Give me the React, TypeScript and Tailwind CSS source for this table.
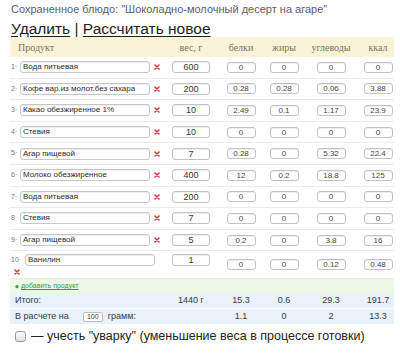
const rows = [
  { n: 1, name: 'Вода питьевая', w: '600', p: '0', f: '0', c: '0', k: '0' },
  { n: 2, name: 'Кофе вар.из молот.без сахара', w: '200', p: '0.28', f: '0.28', c: '0.06', k: '3.88' },
  { n: 3, name: 'Какао обезжиренное 1%', w: '10', p: '2.49', f: '0.1', c: '1.17', k: '23.9' },
  { n: 4, name: 'Стевия', w: '10', p: '0', f: '0', c: '0', k: '0' },
  { n: 5, name: 'Агар пищевой', w: '7', p: '0.28', f: '0', c: '5.32', k: '22.4' },
  { n: 6, name: 'Молоко обезжиренное', w: '400', p: '12', f: '0.2', c: '18.8', k: '125' },
  { n: 7, name: 'Вода питьевая', w: '200', p: '0', f: '0', c: '0', k: '0' },
  { n: 8, name: 'Стевия', w: '7', p: '0', f: '0', c: '0', k: '0' },
  { n: 9, name: 'Агар пищевой', w: '5', p: '0.2', f: '0', c: '3.8', k: '16' },
]

const grid = 'grid grid-cols-[158px_46px_54px_32px_62px_32px]'

function Cross() {
  return (
    <svg width="6" height="6" viewBox="0 0 6 6" className="shrink-0">
      <path d="M1 1L5 5M5 1L1 5" stroke="#d0343a" strokeWidth="1.5" strokeLinecap="round" />
    </svg>
  )
}

function Num({ v }: { v: string }) {
  return (
    <div className="flex justify-center">
      <div className="w-[29px] h-[11px] rounded-[3px] border border-[#c2c2c2] bg-white shadow-[inset_0_1px_1px_rgba(0,0,0,0.07)] text-[8px] leading-[9px] text-center text-[#444]">
        {v}
      </div>
    </div>
  )
}

function Weight({ v }: { v: string }) {
  return (
    <div className="flex justify-center">
      <div className="w-[38px] h-[12px] rounded-[3px] border border-[#c2c2c2] bg-white shadow-[inset_0_1px_1px_rgba(0,0,0,0.07)] text-[9px] leading-[10px] text-center text-[#333]">
        {v}
      </div>
    </div>
  )
}

function NameBox({ v }: { v: string }) {
  return (
    <div className="w-[130px] h-[12px] rounded-[3px] border border-[#c6c6c6] bg-white shadow-[inset_0_1px_1px_rgba(0,0,0,0.07)] text-[8px] leading-[10px] pl-[2px] text-[#2a2a2a] whitespace-nowrap overflow-hidden">
      {v}
    </div>
  )
}

export default function App() {
  return (
    <div className="w-[400px] h-[355px] bg-white overflow-hidden font-['Liberation_Sans',Arial,sans-serif]">
      <div className="pl-[11px] pt-[3px] text-[11px] leading-[12px] text-[#5e5e5e]">
        Сохраненное блюдо: "Шоколадно-молочный десерт на агаре"
      </div>
      <div className="pl-[11px] mt-[6px] text-[15.5px] leading-[16px] text-[#1e1e1e]">
        <span className="underline underline-offset-2">Удалить</span>
        <span> | </span>
        <span className="underline underline-offset-2">Рассчитать новое</span>
      </div>

      <div className="ml-[10px] w-[384px]">
        <div className={`${grid} h-[20px] items-center bg-[#fbf3d8] font-['Liberation_Serif',serif] text-[10px] text-[#77725f]`}>
          <div className="pl-[8px]">Продукт</div>
          <div className="text-center">вес, г</div>
          <div className="text-center">белки</div>
          <div className="text-center">жиры</div>
          <div className="text-center">углеводы</div>
          <div className="text-center">ккал</div>
        </div>

        {rows.map((r) => (
          <div key={r.n} className={`${grid} h-[21.6px] items-center border-b border-[#ebebeb]`}>
            <div className="flex items-center">
              <span className="w-[10px] pl-[1px] text-[7px] text-[#777]">{r.n}·</span>
              <NameBox v={r.name} />
              <span className="ml-[4px]"><Cross /></span>
            </div>
            <Weight v={r.w} />
            <Num v={r.p} />
            <Num v={r.f} />
            <Num v={r.c} />
            <Num v={r.k} />
          </div>
        ))}

        <div className={`${grid} h-[28px] items-center border-b border-[#ebebeb]`}>
          <div className="self-start pt-[3px] flex flex-col">
            <div className="flex items-center">
              <span className="w-[15px] pl-[1px] text-[7px] text-[#777]">10·</span>
              <NameBox v="Ванилин" />
            </div>
            <span className="ml-[4px] mt-[3px]"><Cross /></span>
          </div>
          <div className="self-start pt-[3px]">
            <Weight v="1" />
          </div>
          <Num v="0" />
          <Num v="0" />
          <Num v="0.12" />
          <Num v="0.48" />
        </div>

        <div className="h-[14px] bg-[#eef8e6] flex items-center pl-[5px] gap-[2px] text-[7px] text-[#3b9a3b]">
          <span className="text-[5px]">◆</span>
          <span className="underline">добавить продукт</span>
        </div>

        <div className={`${grid} h-[15px] items-center bg-[#e9f1fb] text-[9px] text-[#3a3a3a]`}>
          <div className="pl-[5px]">Итого:</div>
          <div className="text-center">1440 г</div>
          <div className="text-center">15.3</div>
          <div className="text-center">0.6</div>
          <div className="text-center">29.3</div>
          <div className="text-center">191.7</div>
        </div>
        <div className={`${grid} h-[15px] mt-[1px] items-center bg-[#e9f1fb] text-[9px] text-[#3a3a3a]`}>
          <div className="pl-[5px] flex items-center">
            <span>В расчете на</span>
            <span className="ml-[14px] w-[20px] h-[10px] rounded-[2px] border border-[#bdbdbd] bg-white text-[7px] leading-[8px] text-center">100</span>
            <span className="ml-[5px]">грамм:</span>
          </div>
          <div />
          <div className="text-center">1.1</div>
          <div className="text-center">0</div>
          <div className="text-center">2</div>
          <div className="text-center">13.3</div>
        </div>
      </div>

      <div className="mt-[4px] ml-[15px] flex items-center h-[16px] text-[12.5px] text-[#222]">
        <span className="w-[11px] h-[11px] rounded-[3px] border border-[#9a9a9a] bg-gradient-to-b from-white to-[#e2e2e2]" />
        <span className="ml-[5px]">— учесть "уварку" (уменьшение веса в процессе готовки)</span>
      </div>
    </div>
  )
}
